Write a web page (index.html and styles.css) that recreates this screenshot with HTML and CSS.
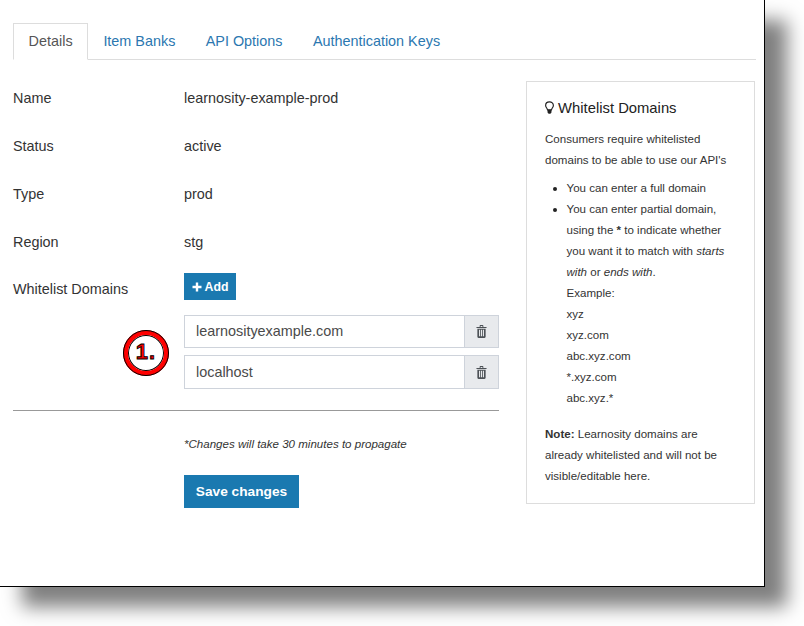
FILE: index.html
```html
<!DOCTYPE html>
<html lang="en">
<head>
<meta charset="utf-8">
<title>Details</title>
<link rel="stylesheet" href="styles.css">
</head>
<body>
<div class="window">
  <ul class="tabs">
    <li class="tab active">Details</li>
    <li class="tab">Item Banks</li>
    <li class="tab">API Options</li>
    <li class="tab">Authentication Keys</li>
  </ul>
  <div class="content">
    <div class="main">
      <div class="row"><div class="label">Name</div><div>learnosity-example-prod</div></div>
      <div class="row"><div class="label">Status</div><div>active</div></div>
      <div class="row"><div class="label">Type</div><div>prod</div></div>
      <div class="row"><div class="label">Region</div><div>stg</div></div>
      <div class="row row-add"><div class="label">Whitelist Domains</div>
        <button class="btn btn-add"><svg class="plus" viewBox="0 0 10 10"><path d="M5 .5v9M.5 5h9"/></svg>Add</button>
      </div>
      <div class="domains">
        <div class="callout"><span class="callout-text">1.</span></div>
        <div class="domain"><div class="domain-value">learnosityexample.com</div><div class="domain-del"><svg class="trash" viewBox="0 0 12 14"><path d="M4 2V.8C4 .4 4.300 0 4.700 0h2.600C7.700 0 8 .4 8 .8V2h3.500v1.300H.5V2zM5 2h2V1H5zM1.500 4h9v8.700c0 .8-.5 1.300-1.200 1.300H2.700c-.7 0-1.200-.5-1.200-1.300zM3.300 5.200v7h1.200v-7zm2.100 0v7h1.200v-7zm2.100 0v7h1.200v-7z"/></svg></div></div>
        <div class="domain domain-second"><div class="domain-value">localhost</div><div class="domain-del"><svg class="trash" viewBox="0 0 12 14"><path d="M4 2V.8C4 .4 4.300 0 4.700 0h2.600C7.700 0 8 .4 8 .8V2h3.500v1.300H.5V2zM5 2h2V1H5zM1.500 4h9v8.700c0 .8-.5 1.300-1.200 1.300H2.700c-.7 0-1.200-.5-1.200-1.300zM3.300 5.200v7h1.200v-7zm2.100 0v7h1.200v-7zm2.100 0v7h1.200v-7z"/></svg></div></div>
      </div>
      <hr class="rule">
      <div class="actions">
        <p class="note">*Changes will take 30 minutes to propagate</p>
        <button class="btn btn-save">Save changes</button>
      </div>
    </div>
    <aside class="panel">
      <h4 class="panel-title"><svg class="bulb" viewBox="0 0 10 14"><path class="bulb-glass" d="M5 .7C2.500 .7.700 2.500.700 4.700c0 2 1.700 2.800 2.100 5h4.400c.4-2.200 2.100-3 2.100-5C9.300 2.500 7.500 .7 5 .7z"/><path class="bulb-base" d="M2.800 9.500h4.400v2.400C7.200 13 6.200 14 5 14s-2.200-1-2.200-2.100z"/></svg> Whitelist Domains</h4>
      <p class="panel-text panel-intro">Consumers require whitelisted domains to be able to use our API's</p>
      <ul class="panel-list">
        <li>You can enter a full domain</li>
        <li>You can enter partial domain, using the <b>*</b> to indicate whether you want it to match with <em>starts with</em> or <em>ends with</em>.<br>Example:<br>xyz<br>xyz.com<br>abc.xyz.com<br>*.xyz.com<br>abc.xyz.*</li>
      </ul>
      <p class="panel-text"><b>Note:</b> Learnosity domains are already whitelisted and will not be visible/editable here.</p>
    </aside>
  </div>
</div>
</body>
</html>
```

FILE: styles.css
```css
* { box-sizing: border-box; }
html, body { margin: 0; height: 100%; background: #fff; overflow: hidden; }
body { font-family: "Liberation Sans", Arial, sans-serif; font-size: 14.4px; color: #333; }
.window {
  width: 765px; height: 587px; background: #fff;
  border-right: 1px solid #000; border-bottom: 1px solid #000;
  box-shadow: 22px 20px 18px rgba(0,0,0,.5);
  padding: 23px 10px 0 13px;
}
.tabs { list-style: none; margin: 0; padding: 0; display: flex; height: 37px; border-bottom: 1px solid #ddd; width: 743px; }
.tab { padding: 9px 14.200px; height: 37px; line-height: 17px; color: #2b77b0; border: 1px solid transparent; white-space: nowrap; }
.tab.active { padding: 9px 14.600px; color: #555; background: #fff; border-color: #ddd; border-bottom-color: #fff; }
.content { display: flex; justify-content: space-between; width: 742px; padding-top: 21px; }
.main { width: 486px; }
.row { display: flex; height: 48px; padding-top: 9px; line-height: 17px; color: #333; }
.label { width: 171px; flex: none; }
.row-add { height: 42px; padding-top: 0; }
.row-add .label { padding-top: 8px; }
.btn { font-family: inherit; color: #fff; background: #1a79b0; border: 0; border-radius: 0; padding: 0; font-weight: 700; }
.btn-add { width: 52px; height: 27px; font-size: 12.300px; display: flex; align-items: center; justify-content: center; gap: 3px; }
.plus { width: 10px; height: 10px; fill: none; stroke: #fff; stroke-width: 2.400; }
.domains { position: relative; padding-left: 171px; display: flex; flex-direction: column; gap: 7px; }
.domain { display: flex; height: 33px; border: 1px solid #ced3db; }
.domain-second { height: 34px; }
.domain-value { flex: 1; padding: 0 11px; line-height: 30px; color: #4a4a4a; border-right: 1px solid #ced3db; }
.domain-second .domain-value { line-height: 32px; }
.domain-del { width: 33px; background: #e8eaed; display: flex; align-items: center; justify-content: center; }
.trash { width: 11px; height: 13px; fill: #4c5156; }
.callout {
  position: absolute; left: 110px; top: 15px; width: 46px; height: 46px; border-radius: 50%;
  border: 5px solid #f00; background: #fff; outline: 1px solid #000; outline-offset: -1px;
  box-shadow: inset 0 0 0 1px #000; display: flex; align-items: center; justify-content: center; padding-bottom: 3px;
}
.callout-text { font-size: 22px; font-weight: 700; color: #f00; -webkit-text-stroke: .9px #000; letter-spacing: 1px; }
.rule { border: 0; border-top: 1px solid #999; margin: 21px 0 0; }
.actions { padding-left: 171px; }
.note { margin: 25px 0 0; font-size: 11.550px; line-height: 16px; font-style: italic; color: #333; }
.btn-save { display: block; margin-top: 23px; width: 115px; height: 33px; font-size: 13.700px; }
.panel { width: 229px; height: 423px; border: 1px solid #ddd; padding: 17px 18px 0; font-size: 11.550px; line-height: 21px; color: #333; }
.panel-title { margin: 0 0 12px; font-size: 14.800px; line-height: 18px; font-weight: 400; color: #222; }
.bulb { width: 9px; height: 13px; vertical-align: -1px; }
.bulb-glass { fill: none; stroke: #222; stroke-width: 1.300; }
.bulb-base { fill: #222; }
.panel-text { margin: 0; }
.panel-intro { margin-bottom: 7px; }
.panel-list { margin: 0 0 15px; padding-left: 21.500px; list-style: none; }
.panel-list li { position: relative; }
.panel-list li::before { content: ""; position: absolute; left: -14px; top: 8.500px; width: 4px; height: 4px; border-radius: 50%; background: #222; }
```
